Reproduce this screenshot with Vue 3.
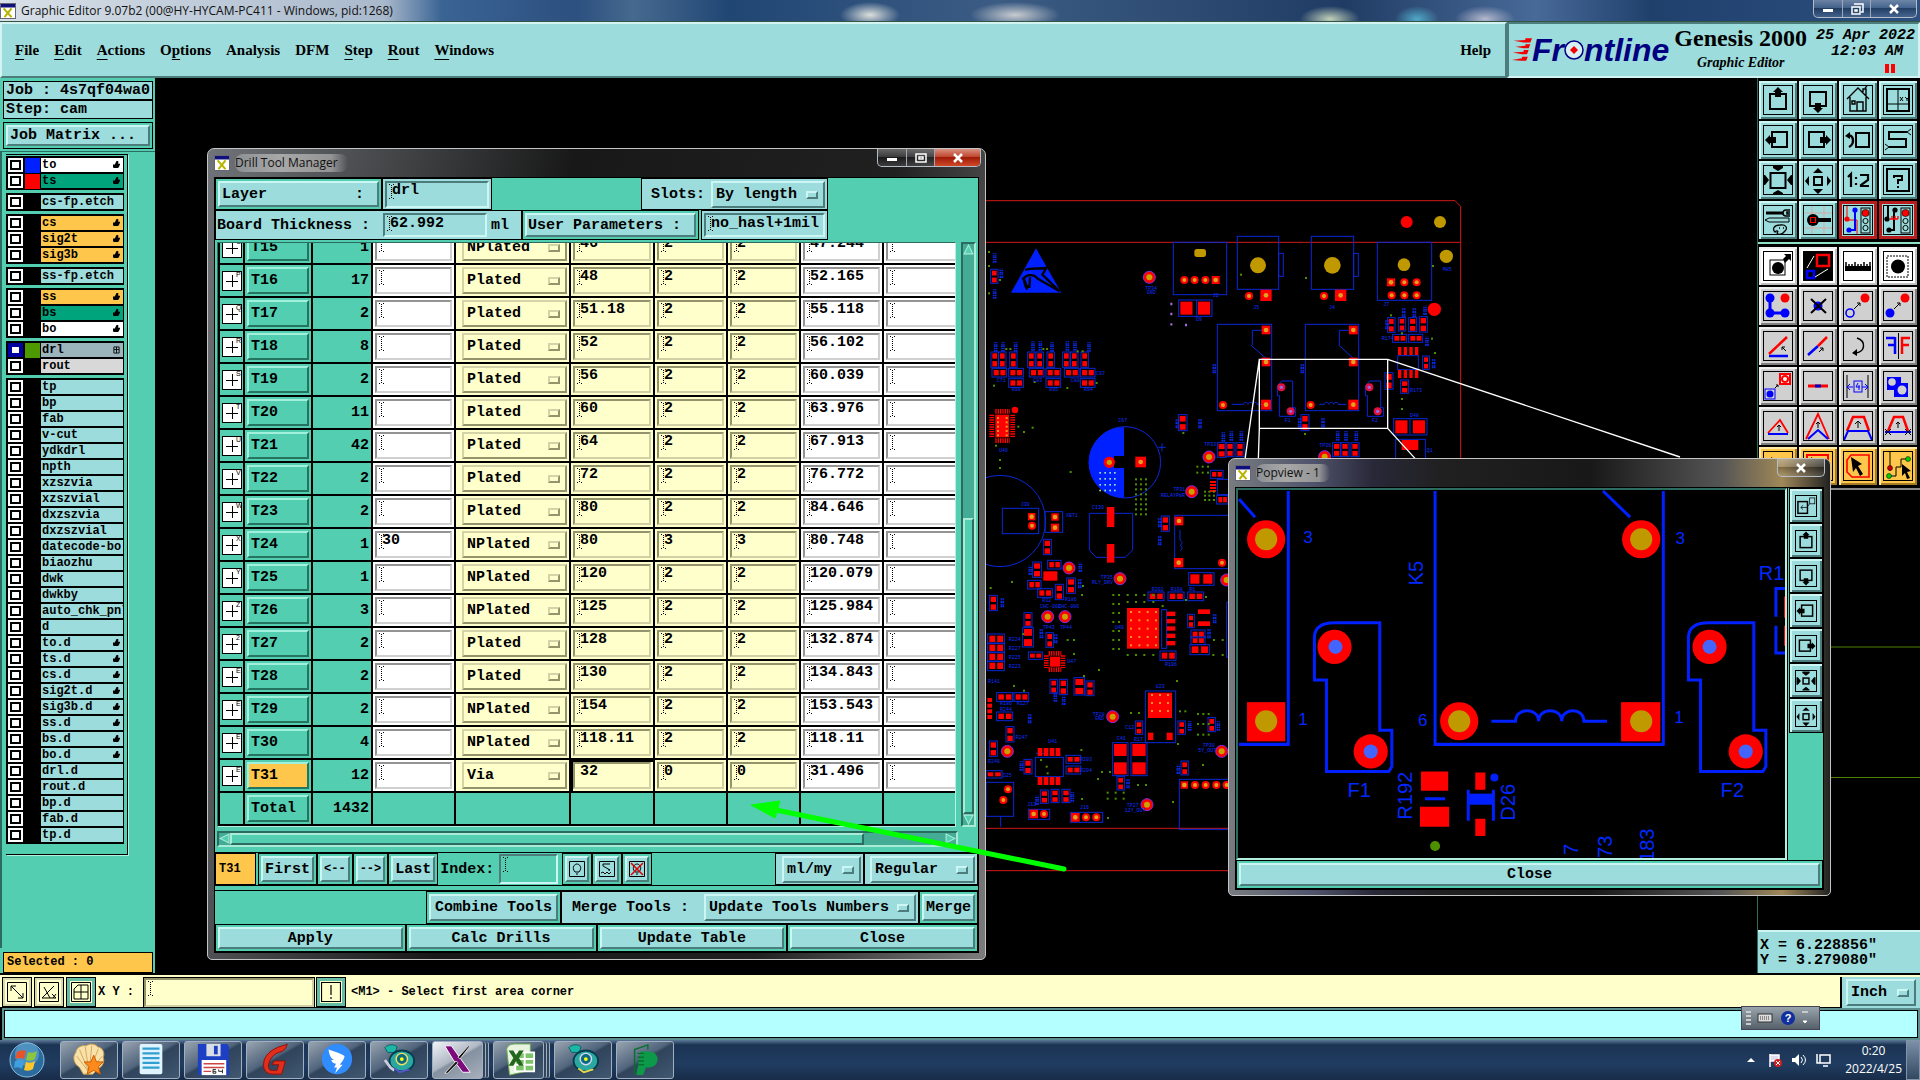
<script setup>
import { ref } from 'vue'

const menus = [
    { name: 'File', at: 0 },
    { name: 'Edit', at: 0 },
    { name: 'Actions', at: 0 },
    { name: 'Options', at: 1 },
    { name: 'Analysis', at: -1 },
    { name: 'DFM', at: -1 },
    { name: 'Step', at: 0 },
    { name: 'Rout', at: 0 },
    { name: 'Windows', at: 0 }
]

const layerGroups = [
    [
        { name: 'to', tone: 'white', color: '#0020ff', hand: true },
        { name: 'ts', tone: 'green', color: '#ff0000', hand: true }
    ],
    [{ name: 'cs-fp.etch' }],
    [
        { name: 'cs', tone: 'orange', hand: true },
        { name: 'sig2t', tone: 'orange', hand: true },
        { name: 'sig3b', tone: 'orange', hand: true }
    ],
    [{ name: 'ss-fp.etch' }],
    [
        { name: 'ss', tone: 'orange', hand: true },
        { name: 'bs', tone: 'green', hand: true },
        { name: 'bo', tone: 'white', hand: true }
    ],
    [
        { name: 'drl', tone: 'steel', color: '#4c9900', grid: true, on: true },
        { name: 'rout', tone: 'grey' }
    ],
    [
        ...['tp', 'bp', 'fab', 'v-cut', 'ydkdrl', 'npth', 'xzszvia', 'xzszvial', 'dxzszvia', 'dxzszvial',
            'datecode-bo', 'biaozhu', 'dwk', 'dwkby', 'auto_chk_pnl', 'd'].map(name => ({ name })),
        ...['to.d', 'ts.d', 'cs.d', 'sig2t.d', 'sig3b.d', 'ss.d', 'bs.d', 'bo.d'].map(name => ({ name, hand: true })),
        ...['drl.d', 'rout.d', 'bp.d', 'fab.d', 'tp.d'].map(name => ({ name }))
    ]
]

const tools = ref([
    ['T15', 1, '', 'NPlated', '46', '2', '2', '47.244', 'O'],
    ['T16', 17, '', 'Plated', '48', '2', '2', '52.165', 'P'],
    ['T17', 2, '', 'Plated', '51.18', '2', '2', '55.118', 'Q'],
    ['T18', 8, '', 'Plated', '52', '2', '2', '56.102', 'R'],
    ['T19', 2, '', 'Plated', '56', '2', '2', '60.039', 'S'],
    ['T20', 11, '', 'Plated', '60', '2', '2', '63.976', 'T'],
    ['T21', 42, '', 'Plated', '64', '2', '2', '67.913', 'U'],
    ['T22', 2, '', 'Plated', '72', '2', '2', '76.772', 'V'],
    ['T23', 2, '', 'Plated', '80', '2', '2', '84.646', 'W'],
    ['T24', 1, '30', 'NPlated', '80', '3', '3', '80.748', 'X'],
    ['T25', 1, '', 'NPlated', '120', '2', '2', '120.079', 'Y'],
    ['T26', 3, '', 'NPlated', '125', '2', '2', '125.984', 'Z'],
    ['T27', 2, '', 'Plated', '128', '2', '2', '132.874', '2'],
    ['T28', 2, '', 'Plated', '130', '2', '2', '134.843', 'E'],
    ['T29', 2, '', 'NPlated', '154', '2', '2', '153.543', 'E'],
    ['T30', 4, '', 'NPlated', '118.11', '2', '2', '118.11', 'E'],
    ['T31', 12, '', 'Via', '32', '0', '0', '31.496', 'E']
].map(([id, count, slot, kind, size, plus, minus, drill, sym]) => ({ id, count, slot, kind, size, plus, minus, drill, sym })))

const selected = ref('T31')
const kinds = ['Plated', 'NPlated', 'Via']

// toolbox icons, drawn on a 30 x 30 grid
const up = '<rect x="7" y="9" width="16" height="15" fill="none" stroke="#000" stroke-width="2"/><path d="M15 2l5 5h-2v5h-6V7h-2z"/>'
const down = '<rect x="7" y="7" width="16" height="14" fill="none" stroke="#000" stroke-width="2"/><path d="M15 28l5-5h-2v-5h-6v5h-2z"/>'
const left = '<rect x="9" y="7" width="15" height="15" fill="none" stroke="#000" stroke-width="2"/><path d="M2 15l5-5v2h6v6H7v2z"/>'
const right = '<rect x="6" y="7" width="15" height="15" fill="none" stroke="#000" stroke-width="2"/><path d="M28 15l-5-5v2h-6v6h6v2z"/>'
const zoomOut = '<rect x="7.5" y="8" width="15" height="15" fill="none" stroke="#000" stroke-width="2"/><path d="M15 6l-5-3V1h10v2zM15 25l-5 3v1h10v-1zM6 15l-4-5H1v10h1zM24 15l4-5h1v10h-1z"/>'
const zoomIn = '<rect x="11" y="12" width="8" height="8" fill="none" stroke="#000" stroke-width="2"/><path d="M15 3l5 5H10zM15 29l5-5H10zM2 16l4-5v10zM28 16l-4-5v10z"/>'
const popZoomOut = '<rect x="11" y="11" width="8" height="8" fill="none" stroke="#000" stroke-width="2"/><path d="M15 8l-5-4V2h10v2zM15 23l-5 4v1h10v-1zM8 15l-4-5H2v10h2zM22 15l4-5h2v10h-2z"/>'
const lights = '<rect x="18" y="3" width="9" height="25" fill="none" stroke="#000"/><circle cx="22.5" cy="8" r="3.6" fill="#f00" stroke="#000" stroke-width=".6"/><circle cx="22.5" cy="16" r="2.6" fill="none" stroke="#000"/><circle cx="22.5" cy="23" r="2.6" fill="none" stroke="#000"/>'
const pointer = 'M8 6l11 7-4 2 5 8-3 2-4-8-3 4z'

const viewTools = [
    { title: 'Pan up', svg: up },
    { title: 'Pan down', svg: down },
    { title: 'Home', svg: '<path d="M4 14L15 3l11 11M7 12v14h16V12M14 26V17h6v9M9 16h3v3H9zM20 7V4h3v7M22 3l2-2" fill="none" stroke="#000" stroke-width="1.4"/>' },
    { title: 'Zoom by XY', svg: '<rect x="4" y="4" width="22" height="22" fill="none" stroke="#000" stroke-width="2"/><path d="M15 4v22M4 19h22M17 12l3 4M20 12l-3 4M22 12l2 2 2-2M24 14v2" fill="none" stroke="#000"/>' },
    { title: 'Pan left', svg: left },
    { title: 'Pan right', svg: right },
    { title: 'Previous view', svg: '<rect x="13" y="8" width="13" height="14" fill="none" stroke="#000" stroke-width="2"/><path d="M4 11c7-3 8 8 2 11" fill="none" stroke="#000" stroke-width="2.4"/><path d="M2 11l5-4v7z"/>' },
    { title: 'Serpentine', svg: '<path d="M24 7H6v7h17v8H6" fill="none" stroke="#000" stroke-width="2"/><path d="M24 7l4-3M24 7l4 3M6 22l-4-3M6 22l-4 3" stroke="#000"/>' },
    { title: 'Zoom out', svg: zoomOut },
    { title: 'Zoom in', svg: zoomIn },
    { title: 'Zoom ratio', svg: '<path d="M5 12l3-3v13M13 12v2M13 18v2M17 10h8v5l-7 5v1h8" fill="none" stroke="#000" stroke-width="2.2"/>' },
    { title: 'Query', svg: '<rect x="4" y="4" width="22" height="22" fill="none" stroke="#000" stroke-width="2"/><path d="M11 13v-2h8v4h-4v4M15 21v2" fill="none" stroke="#000" stroke-width="2"/>' },
    { title: 'Setup', svg: '<path d="M3 8h17" stroke="#000" stroke-width="3"/><path d="M27 5h-4c-4 0-4 6 0 6h4M27 7h-3v2h3" fill="none" stroke="#000" stroke-width="1.6"/><path d="M2 15l4-2h20v4H6z" fill="none" stroke="#000"/><path d="M12 27c-3-3-1-7 5-7 6-1 8 3 5 6-3 4-7 4-8 2 2-2 0-3-2-1zM16 23h1M20 23h1" fill="none" stroke="#000" stroke-width="1.3"/>' },
    { title: 'Snap', svg: '<path d="M2 8h27M2 23h27M9 1v28M21 1v28" stroke="#d9a9a2"/><circle cx="10" cy="15" r="6"/><path d="M14 15h14" stroke="#000" stroke-width="4"/><path d="M7.5 12.5h5v5h-5z" fill="#000" stroke="#f00" stroke-width="1.2"/>' },
    { title: 'Net red', tone: 'red', svg: '<path d="M4 1v14h10v14" fill="none" stroke="#f00"/><path d="M12 6v19H6" fill="none" stroke="#00f" stroke-width="2"/><circle cx="4" cy="14" r="2.6" fill="#f00"/><circle cx="12" cy="5" r="2.6" fill="#00f"/><circle cx="6" cy="25" r="2.6" fill="#00f"/>' + lights },
    { title: 'Net black', tone: 'red', svg: '<path d="M5 14V1M11 6v19H7" fill="none" stroke="#000" stroke-width="2"/><path d="M7 14h8M9 11v3M12 11v3M15 11v3" stroke="#f00" stroke-width="1.3"/><circle cx="4" cy="14" r="2.6"/><circle cx="12" cy="5" r="2.6"/><circle cx="6" cy="25" r="2.6"/>' + lights }
]

const editTools = [
    { title: 'Select one', tone: 'white', svg: '<rect x="7" y="9" width="15" height="15" fill="none" stroke="#000"/><circle cx="15" cy="17" r="6"/><path d="M20 8l3-3-2-2h7v7l-2-2-4 4z"/>' },
    { title: 'Select by frame', tone: 'white', svg: '<rect x="1" y="1" width="28" height="28"/><rect x="14" y="4" width="12" height="11" fill="none" stroke="#f00" stroke-width="2.5"/><rect x="4" y="20" width="7" height="7" fill="none" stroke="#00f" stroke-width="2.5"/><path d="M4 17l7-12M12 26l13-8" stroke="#fff"/>' },
    { title: 'Measure', tone: 'white', svg: '<path d="M3 19v-8M6 19v-6M9 19v-6M12 19v-8M15 19v-6M18 19v-6M21 19v-8M24 19v-6M27 19v-8" stroke="#000" stroke-width="1.5"/><path d="M2 15h26v5H2z"/>' },
    { title: 'Filter', tone: 'white', svg: '<rect x="4" y="5" width="21" height="21" fill="none" stroke="#000" stroke-dasharray="2 1"/><circle cx="15" cy="15.5" r="7"/>' },
    { title: 'Copy', svg: '<path d="M7 7v15h15" fill="none" stroke="#00f" stroke-width="3"/><circle cx="7" cy="7" r="4.5" fill="#00f"/><circle cx="7" cy="22" r="4.5" fill="#00f"/><circle cx="22" cy="22" r="4.5" fill="#00f"/><circle cx="22" cy="7" r="4.5" fill="#f00"/>' },
    { title: 'Delete', svg: '<circle cx="15" cy="15" r="4.5" fill="#00f"/><path d="M8 8l15 14M23 8L8 22" stroke="#000" stroke-width="2"/>' },
    { title: 'Move', svg: '<circle cx="7" cy="22" r="4" fill="none" stroke="#00f" stroke-width="1.6"/><circle cx="22" cy="7" r="4.5" fill="#f00"/><path d="M11 18l6-6M14 12h3v3" stroke="#000" fill="none"/>' },
    { title: 'Duplicate', svg: '<circle cx="7" cy="22" r="4.5" fill="#00f"/><circle cx="22" cy="7" r="4.5" fill="#f00"/><path d="M11 18l6-6M14 12h3v3" stroke="#000" fill="none"/>' },
    { title: 'Rotate', svg: '<path d="M6 25h19" stroke="#00f" stroke-width="2.5"/><path d="M6 23L24 6" stroke="#f00" stroke-width="2.5"/><path d="M23 20l-4-4M19 19v-3h3" stroke="#000" fill="none"/>' },
    { title: 'Stretch', svg: '<path d="M5 24l10-9" stroke="#00f" stroke-width="2.5"/><path d="M15 15l9-9" stroke="#f00" stroke-width="2.5"/><path d="M16 21l4-4M17 17h3v3" stroke="#000" fill="none"/>' },
    { title: 'Turn', svg: '<path d="M14 7c9 3 9 14-2 15" fill="none" stroke="#000" stroke-width="1.5"/><path d="M14 18l-5 4 5 3z"/>' },
    { title: 'Mirror', svg: '<path d="M3 7h9M5 14h7M12 6v17" fill="none" stroke="#00f" stroke-width="2.5"/><path d="M27 7h-8v16M19 14h7" fill="none" stroke="#f00" stroke-width="2.5"/><path d="M15.5 2v26" stroke="#000"/>' },
    { title: 'Scale', svg: '<rect x="2" y="18" width="10" height="10" fill="none" stroke="#00f"/><circle cx="7" cy="23" r="3.5" fill="#00f"/><rect x="17" y="3" width="10" height="10" fill="#fff" stroke="#f00" stroke-width="2"/><circle cx="22" cy="8" r="3" fill="none" stroke="#f00" stroke-width="2"/><path d="M12 17l3-3M13 14h2v2" stroke="#000" fill="none"/>' },
    { title: 'Join', svg: '<path d="M5 15h20" stroke="#f00" stroke-width="3"/><path d="M12 15h6" stroke="#00c" stroke-width="3"/>' },
    { title: 'Step and repeat', svg: '<path d="M4 4v23M25 4v23" stroke="#000"/><path d="M5 16h5M19 16h5M7 13l-3 3 3 3M22 13l3 3-3 3" fill="none" stroke="#00f"/><rect x="11" y="10" width="8" height="11" fill="none" stroke="#00f"/><path d="M15 12l-2 4h4M16 14v5" fill="none" stroke="#00f"/>' },
    { title: 'Merge shapes', svg: '<path d="M4 6h14v6h7v14H11v-7H4z" fill="#00f"/><circle cx="9" cy="11" r="3.8" fill="#d0d0d0"/><circle cx="19" cy="19" r="4.5" fill="#d0d0d0"/>' },
    { title: 'Corner', svg: '<path d="M5 22L17 9l8 13" fill="none" stroke="#f00" stroke-width="1.8"/><path d="M5 23h20" stroke="#00f" stroke-width="2"/><path d="M16 20v-6M14 16l2-2 2 2" stroke="#000" fill="none"/>' },
    { title: 'Chamfer', svg: '<path d="M3 28L15 3l11 25" fill="none" stroke="#f00" stroke-width="1.8"/><path d="M5 28l10-9 10 9" fill="none" stroke="#00f" stroke-width="2"/><path d="M15 17v-6M13 13l2-2 2 2" stroke="#000" fill="none"/>' },
    { title: 'Bridge', svg: '<path d="M4 20L10 6h11l5 14" fill="none" stroke="#f00" stroke-width="2.5"/><path d="M1 29l4-9h20l4 9" fill="none" stroke="#00f" stroke-width="2"/><path d="M15 17v-7M12 13l3-3 3 3" stroke="#000" fill="none"/>' },
    { title: 'Trim', svg: '<path d="M5 20L11 6h9l5 14" fill="none" stroke="#f00" stroke-width="2.5"/><path d="M2 21h26" stroke="#00f" stroke-width="2"/><path d="M2 18l6 6M8 18l-6 6M22 18l6 6M28 18l-6 6" stroke="#000"/><path d="M15 17v-6M13 13l2-2 2 2" stroke="#000" fill="none"/>' },
    { title: 'Pick', tone: 'amber', svg: `<path d="${pointer}"/>` },
    { title: 'Pick frame', tone: 'amber', svg: `<rect x="4" y="4" width="21" height="22" fill="none" stroke="#f00" stroke-width="2"/><path d="${pointer}"/>` },
    { title: 'Pick polygon', tone: 'amber', svg: `<path d="M8 4h18v22H9l-5-5V9z" fill="none" stroke="#f00" stroke-width="1.6"/><path d="${pointer}"/>` },
    { title: 'Pick net', tone: 'amber', svg: '<path d="M7 1v19M7 25h6v-9h5V8h8" fill="none" stroke="#000"/><circle cx="7" cy="17" r="2.5" fill="#c00" stroke="#000" stroke-width=".5"/><circle cx="6" cy="25" r="2.5" fill="#0c0" stroke="#000" stroke-width=".5"/><circle cx="25" cy="8" r="2.5" fill="#0c0" stroke="#000" stroke-width=".5"/><path d="M19 13l9 7-4 1 3 6-3 1-2-6-3 3z"/>' }
]

const popTools = [
    { title: 'Restore', svg: '<rect x="4" y="9" width="13" height="16" fill="none" stroke="#000" stroke-width="2"/><rect x="20" y="4" width="7" height="8" fill="none" stroke="#000"/><path d="M20 12l-4 5H8M11 14l-3 3 3 3" stroke="#000" fill="none"/>' },
    { title: 'Up', svg: up },
    { title: 'Down', svg: down },
    { title: 'Left', svg: left },
    { title: 'Right', svg: right },
    { title: 'Zoom out', svg: popZoomOut },
    { title: 'Zoom in', svg: zoomIn }
]

// board artwork, in thirds of a pixel from the board's corner
const vChips = [
    ...[35, 58, 91, 145, 170, 203, 250, 274, 305].map(x => [x, 488, 18, 42]),
    [597, 676, 22, 44], [714, 760, 22, 40], [740, 760, 20, 38], [770, 760, 20, 38],
    [1060, 760, 20, 38], [1085, 760, 20, 38], [1115, 760, 20, 38],
    [1225, 385, 18, 40], [1257, 385, 18, 36], [1288, 385, 20, 38], [1320, 382, 20, 42],
    [1217, 550, 20, 46], [1264, 572, 20, 36], [1330, 500, 16, 36], [965, 676, 20, 44],
    [546, 980, 20, 42], [34, 240, 18, 38],
    [192, 1050, 20, 42], [160, 1118, 22, 42], [262, 1166, 22, 42], [228, 1185, 20, 42],
    [30, 1218, 20, 42], [134, 1270, 20, 38], [130, 1315, 28, 54], [200, 1330, 18, 40],
    [212, 1470, 18, 38], [240, 1470, 20, 42], [284, 1465, 28, 48], [320, 1475, 20, 40],
    [80, 1612, 20, 42], [30, 1655, 20, 42], [134, 1710, 20, 40], [183, 1802, 20, 36],
    [215, 1800, 20, 36], [248, 1800, 20, 36], [468, 1595, 18, 36], [596, 1595, 18, 36],
    [686, 1585, 18, 38], [605, 1715, 18, 38], [413, 1762, 18, 36],
    [400, 1660, 42, 95], [455, 1660, 44, 95], [625, 1275, 16, 36]
]
const hChips = [
    ...[38, 88, 150, 200, 255, 303].map(x => [x, 537, 40, 22]),
    ...[88, 200, 303].map(x => [x, 568, 40, 22]),
    [598, 332, 96, 45], [1243, 688, 96, 45], [1240, 435, 38, 20], [1288, 435, 38, 20],
    [693, 843, 34, 20], [712, 918, 30, 22], [145, 1173, 36, 22], [205, 1113, 36, 22],
    [175, 1198, 40, 22], [506, 1208, 44, 22], [566, 1208, 44, 22], [625, 1208, 44, 22],
    [25, 1334, 46, 25], [25, 1361, 46, 25], [25, 1388, 46, 25], [25, 1415, 46, 25],
    [542, 1385, 44, 24], [52, 1510, 44, 22], [104, 1510, 40, 22], [52, 1568, 44, 22],
    [147, 1388, 38, 18], [260, 1698, 40, 20], [260, 1730, 40, 20], [635, 1322, 38, 20],
    [635, 1342, 38, 20], [632, 1366, 54, 26], [628, 1150, 72, 34], [20, 1744, 44, 18]
]
const testPoints = [
    [508, 262], [687, 801], [635, 905], [1034, 800], [267, 1134], [420, 1166], [203, 1280],
    [255, 1280], [398, 1580], [82, 1684], [725, 1684], [501, 1844], [740, 1170]
]
const roundPads = [
    [613, 270], [644, 270], [676, 270], [807, 318], [1032, 318], [1273, 277], [1310, 277],
    [1235, 316], [1273, 316], [1310, 316], [729, 645], [992, 645], [156, 1007],
    [726, 1118], [84, 1798], [70, 1830], [192, 1872], [318, 1882], [349, 1882],
    [645, 1785], [677, 1785], [709, 1785], [740, 1785]
]
const squarePads = [
    [707, 270, 24], [858, 316, 34], [1082, 316, 34], [1233, 277, 24], [858, 420, 26], [1120, 420, 26],
    [858, 516, 26], [1120, 516, 26], [858, 644, 30], [1120, 644, 30], [482, 816, 32], [155, 980, 22],
    [225, 981, 22], [225, 1013, 24], [597, 993, 26], [596, 1118, 28], [161, 1872, 26], [286, 1882, 26], [613, 1785, 22]
]
const redBlocks = [
    [381, 951, 22, 60], [381, 1062, 22, 56], [1265, 750, 50, 30], [441, 1254, 96, 122], [504, 1508, 72, 76],
    [504, 1628, 16, 22], [560, 1628, 18, 22], [190, 1144, 42, 28], [654, 1258, 36, 14], [654, 1294, 36, 14],
    ...[0, 1, 2, 3, 4].map(i => [560, 1265 + i * 22, 26, 13]),
    ...[0, 1, 2, 3].map(i => [1254 + i * 17, 471, 10, 24]),
    ...[0, 1, 2, 3].map(i => [1254 + i * 17, 540, 10, 24]),
    ...[0, 1, 2, 3].map(i => [173 + i * 18, 1674, 14, 24]),
    ...[0, 1, 2, 3].map(i => [173 + i * 18, 1761, 14, 24]),
    ...[0, 1, 2, 3].map(i => [690, 873 + i * 9, 18, 6]),
    ...[0, 1, 2, 3].map(i => [22, 1524 + i * 17, 14, 12])
]
const dots = [
    ...[0, 1, 2, 3, 4, 5, 6, 7].flatMap(i => [0, 1, 2].map(j => [468 + j * 15, 868 + i * 15])),
    ...[0, 1, 2, 3, 4, 5, 6].map(i => [400, 1215 + i * 27]),
    ...[0, 1, 2, 3, 4, 5, 6].map(i => [417, 1215 + i * 27]),
    ...[443, 468, 493, 520].flatMap(x => [[x, 1215], [x, 1236], [x, 1395]]),
    ...[652, 668, 684].flatMap(x => [[x, 830], [x, 848]]),
    ...[675, 688, 702].flatMap(x => [[x, 905], [x, 917], [x, 930]]),
    ...[654, 670, 686].flatMap(x => [[x, 1572], [x, 1602], [x, 1634]]),
    ...[383, 407, 431].flatMap(x => [[x, 1808], [x, 1826]]),
    [27, 186], [27, 228], [60, 270], [27, 310], [79, 477], [91, 477], [190, 477], [201, 477], [293, 484], [308, 484],
    [42, 587], [164, 576], [262, 594], [350, 579], [115, 710], [158, 713], [132, 726], [48, 767], [60, 810],
    [60, 834], [272, 846], [783, 254], [978, 264], [1233, 376], [1266, 430], [1359, 228], [1365, 489], [1356, 446],
    [1266, 627], [1266, 657], [610, 729], [975, 732], [96, 1176], [32, 1194], [309, 1188], [306, 1215], [130, 1332],
    [263, 1350], [282, 1350], [282, 1392], [357, 1440], [312, 1458], [102, 1488], [132, 1502], [591, 1473],
    [600, 1564], [616, 1564], [453, 1569], [477, 1569], [304, 1680], [183, 1710], [200, 1730], [203, 1750],
    [669, 1725], [594, 1662], [354, 1767], [366, 1746], [390, 1746], [474, 1785], [498, 1785], [306, 1827],
    [579, 1836], [384, 1884], [702, 1350], [728, 1350], [700, 1395], [728, 1395], [548, 1248], [618, 1230], [678, 1221]
]
const goldDots = [
    ...[0, 1, 2, 3, 4].flatMap(i => [0, 1, 2, 3].map(j => [453 + j * 25, 1266 + i * 25])),
    ...[0, 1, 2].flatMap(i => [516, 540, 564].map(x => [x, 1515 + i * 24])),
    ...[0, 1, 2, 3, 4].flatMap(i => [[54, 684 + i * 13], [80, 684 + i * 13]])
]
const outlines = [
    [580, 157, 160, 157], [772, 139, 124, 159], [896, 190, 14, 69], [994, 139, 127, 159], [1121, 190, 14, 69],
    [1192, 157, 163, 174], [712, 403, 163, 259], [976, 403, 160, 259], [1253, 497, 62, 42], [1247, 748, 89, 62],
    [67, 955, 109, 76], [195, 965, 53, 62], [584, 976, 170, 160], [496, 1503, 91, 155], [166, 1702, 84, 58],
    [18, 1777, 83, 102], [145, 1858, 64, 30], [271, 1867, 97, 30], [598, 1768, 160, 150], [712, 868, 40, 46],
    [740, 1237, 20, 165], [545, 1259, 15, 116]
]
const silk = [
    [495, 300, 'TP34'], [500, 312, 'GND'], [820, 356, 'J5'], [1047, 356, 'J4'], [1388, 244, 'MH5'], [1210, 349, 'J7'],
    [648, 393, 'D9'], [698, 322, 'J2'], [415, 697, 'C67'], [580, 904, 'TP31'], [543, 921, 'RELAYPWR'],
    [122, 947, 'J30'], [258, 980, 'XBT1'], [336, 958, 'C130'], [95, 604, 'R98'], [208, 604, 'R95'], [312, 604, 'R94'],
    [50, 575, 'C71'], [160, 575, 'C83'], [272, 575, 'C80'], [348, 554, 'C97'], [57, 786, 'U46'], [914, 696, 'F1'],
    [1176, 696, 'F2'], [673, 768, 'TP33'], [1018, 771, 'TP36'], [1205, 450, 'R174'], [1290, 605, 'R173'], [1290, 680, 'D48'],
    [1340, 786, 'Q1'], [362, 1168, 'TP35'], [336, 1181, 'RLY_DRV'], [180, 1254, 'CHC-002'], [235, 1254, 'CHC-006'],
    [188, 1316, 'TP43'], [240, 1316, 'TP44'], [86, 1352, 'R224'], [86, 1379, 'R227'], [86, 1406, 'R225'], [86, 1433, 'R223'],
    [405, 1316, 'U49'], [515, 1203, 'R202'], [572, 1203, 'R198'], [628, 1203, 'R1'], [555, 1427, 'R196'], [527, 1495, 'U23'],
    [338, 1577, 'TP28'], [345, 1590, 'GND'], [60, 1545, 'R186'], [110, 1545, 'R127'], [60, 1562, 'R244'], [107, 1648, 'R247'],
    [205, 1660, 'U41'], [300, 1713, 'R203'], [300, 1745, 'R204'], [410, 1650, 'C46'], [462, 1653, 'R17'], [668, 1672, 'TP30'],
    [655, 1687, '5Y_OUT'], [142, 1847, 'J13'], [300, 1856, 'J16'], [440, 1852, 'TP27'], [434, 1867, '12Y_OUT'], [68, 1760, 'D25'],
    [254, 1234, 'R186'], [187, 1237, 'R32'], [262, 1420, 'U47'], [436, 1617, 'C12'], [24, 1480, 'R141'], [24, 1719, 'R246']
]
const silkUp = [
    [48, 485], [70, 485], [108, 485], [160, 482], [182, 482], [217, 485], [263, 482], [286, 482], [328, 485],
    [704, 550], [968, 550], [1222, 418], [1272, 382], [1304, 382], [1336, 375], [1342, 468], [1362, 535],
    [593, 715], [661, 715], [960, 712], [1030, 712], [731, 755], [755, 752], [785, 752], [1074, 752], [1099, 752],
    [1130, 752], [65, 264], [45, 218], [45, 326], [68, 1252], [152, 1155], [300, 1195], [302, 1146], [185, 1345],
    [228, 1360], [227, 1535], [252, 1545], [150, 1600], [172, 1845], [278, 1835], [445, 1795], [596, 1752],
    [716, 1622], [630, 1622], [705, 1300], [688, 1345], [540, 1012], [540, 1066], [125, 1742]
]

const tasks = [
    { title: 'Shell', svg: '<path d="M8 26C2 22 0 15 4 10 5 4 11 2 15 3c4-3 10-2 12 1 6 1 8 7 6 11 2 5-1 10-5 12l-6 6H12z" fill="#f8e2ac" stroke="#c49a4a"/><path d="M18 31L5 14M18 31L8 7M18 31L14 4M18 31L21 3M18 31L28 6M18 31l14-17" stroke="#d8a550" fill="none"/><path d="M23 13l3 7 7 0-5 5 2 8-7-4-7 4 2-8-5-5 7 0z" fill="#ff8a1c" stroke="#c45a00"/>' },
    { title: 'Notes', svg: '<rect x="6" y="1" width="24" height="32" rx="2" fill="#dff4ff"/><path d="M9 6h18M9 11h18M9 16h18M9 21h18M9 26h18" stroke="#329fd0" stroke-width="2.5"/>' },
    { title: 'Save', svg: '<path d="M2 1h31l2 3v30H2z" fill="#1c3fc4"/><rect x="11" y="1" width="15" height="13" fill="#d9dde4"/><rect x="19" y="3" width="4" height="9" fill="#1c3fc4"/><rect x="6" y="18" width="26" height="16" fill="#fff"/><path d="M8 22h22M8 26h22M8 30h8" stroke="#c44" stroke-width="1.5"/><path d="M21 28h-3v4h3v-2h-3M24 28v2h4M28 28v4" stroke="#222" fill="none"/>' },
    { title: 'G', svg: '<path d="M31 1c-3 2-8 2-13 5C10 10 5 17 6 25c1 6 5 8 10 8h9l4-14H17l-2 4h7l-2 6h-5c-3 0-4-2-4-5 1-7 5-12 11-14 5-1 8-4 9-9z" fill="#e22c1c" stroke="#8d1208"/>' },
    { title: 'Chat', svg: '<circle cx="18" cy="17" r="16" fill="#2f8dff"/><path d="M9 7c6 2 13 4 17 7-1 5-4 7-5 9h3l-8 9 2-6h-3l2-4c-4-1-5-3-5-4h3c-4-2-5-5-6-11z" fill="#fff"/>' },
    { title: 'Capture', svg: '<path d="M3 5c3-4 10-4 13-1l-2 6H6z" fill="#1db7a6" stroke="#0b5e66"/><ellipse cx="21" cy="19" rx="13" ry="11" fill="#2aa8a0" stroke="#063c50" stroke-width="2"/><circle cx="21" cy="17" r="6" fill="#0d6a86" stroke="#f0e060" stroke-width="1.5"/><circle cx="21" cy="17" r="2" fill="#ff0"/><path d="M3 18l6 8 4 3" stroke="#ccd" stroke-width="3" fill="none"/><path d="M13 27l6 4 10-3" stroke="#55c" stroke-width="2" fill="none"/>' },
    { title: 'X server', active: true, stack: true, svg: '<path d="M4 3h7l10 14 10 14h-8L13 18z" fill="#7d0a7d" stroke="#fff"/><path d="M31 3h-2L18 15l2 2zM16 19L4 32h3l11-11z" fill="#111" stroke="#ddd"/>' },
    { title: 'Sheet', stack: true, svg: '<path d="M5 7c0-4 4-6 9-6h16v28L8 34z" fill="#e9f4e0" stroke="#6aa84f"/><rect x="14" y="10" width="20" height="20" fill="#7cc36a" stroke="#fff" stroke-width="2"/><path d="M14 17h20M14 23h20M24 10v20" stroke="#fff" stroke-width="2"/><path d="M7 8h5l3 5 3-5h5l-5 8 5 8h-5l-3-5-3 5H7l5-8z" fill="#23671c"/>' },
    { title: 'Capture two', svg: '<path d="M3 5c3-4 10-4 13-1l-2 6H6z" fill="#1db7a6" stroke="#0b5e66"/><ellipse cx="21" cy="19" rx="13" ry="11" fill="#2aa8a0" stroke="#063c50" stroke-width="2"/><circle cx="21" cy="17" r="6" fill="#0d6a86" stroke="#d8d8f0" stroke-width="1.5"/><circle cx="21" cy="17" r="2" fill="#ff0"/><path d="M13 27l6 4 10-3" stroke="#e8d850" stroke-width="2" fill="none"/>' },
    { title: 'P', svg: '<path d="M13 9h9c13 0 12 17 0 17h-3l-3 8H9z" fill="#0c9a48"/><path d="M7 33V7L21 2v5M10 11h7M10 15h7M10 19h7M10 23h7" stroke="#08702f" fill="none" stroke-width="1.5"/>' }
]
</script>

<template>
    <div class="editor">
        <header class="titlebar">
            <svg class="app-icon" viewBox="0 0 16 16"><rect width="16" height="16" fill="#fff" /><rect width="16" height="4" fill="#10107c" /><path d="M3 5l9 10M12 5L4 15" stroke="#b8b400" stroke-width="2.4" /></svg>
            <span class="titlebar__text">Graphic Editor 9.07b2 (00@HY-HYCAM-PC411 - Windows, pid:1268)</span>
            <div class="controls">
                <button aria-label="Minimize"><svg viewBox="0 0 14 12"><rect x="2" y="6" width="10" height="3" fill="#fff" /></svg></button>
                <button aria-label="Restore"><svg viewBox="0 0 14 12"><path d="M4 1h9v8h-2M2 4h8v7H2zM5 7h2v1H5z" fill="none" stroke="#fff" stroke-width="1.5" /></svg></button>
                <button class="controls__close" aria-label="Close editor"><svg viewBox="0 0 14 12"><path d="M3 2l8 8M11 2l-8 8" stroke="#fff" stroke-width="2.5" /></svg></button>
            </div>
        </header>

        <div class="top">
            <nav class="menubar">
                <button v-for="m in menus" :key="m.name" class="menubar__item">
                    <template v-for="(c, i) in m.name" :key="i"><u v-if="i === m.at">{{ c }}</u><template v-else>{{ c }}</template></template>
                </button>
                <button class="menubar__item menubar__help">Help</button>
            </nav>
            <div class="brand">
                <div class="brand__logo">
                    <svg class="brand__speed" viewBox="0 0 24 28"><path d="M2 3l14-1V0h8l-2 5h-8zM4 10l12-1V7h6l-2 5h-6zM1 17l13-1v-2h6l-2 5h-6zM0 26l12-2v-2h7l-2 5h-6z" fill="#f00000" /></svg>
                    <span>Fr</span>
                    <svg class="brand__o" viewBox="0 0 20 22"><ellipse cx="10" cy="11" rx="9" ry="9" fill="#d8f0f4" stroke="#000080" stroke-width="1.5" /><path d="M10 7l4 4-4 4-4-4z" fill="#f00000" /></svg>
                    <span>ntline</span>
                </div>
                <div class="brand__name">
                    <strong>Genesis 2000</strong>
                    <em>Graphic Editor</em>
                </div>
                <div class="brand__date">
                    <span>25 Apr 2022</span>
                    <span class="brand__time">12:03 AM</span>
                    <i class="brand__pause"></i>
                </div>
            </div>
        </div>

        <div class="workspace">
            <aside class="sidebar">
                <div class="job">
                    <div class="job__line">Job : 4s7qf04wa0</div>
                    <div class="job__line">Step: cam</div>
                </div>
                <div class="frame job__matrix"><button class="motif">Job Matrix ...</button></div>
                <div class="layers">
                    <div class="layers__inner">
                        <div v-for="(group, g) in layerGroups" :key="g" class="layers__group">
                            <div v-for="l in group" :key="l.name" class="layer" :class="l.tone">
                                <input type="checkbox" class="layer__check" :class="{ on: l.on }" :aria-label="l.name">
                                <span class="layer__swatch" :style="{ background: l.color || '#000' }"></span>
                                <span class="layer__name">{{ l.name }}</span>
                                <svg v-if="l.hand" class="layer__hand" viewBox="0 0 8 9"><path d="M4 0h2v3h2v2H7v2H6v1H1L0 7V4h2z" /></svg>
                                <svg v-if="l.grid" class="layer__hand" viewBox="0 0 8 9"><path d="M1 1h6v7H1zM1 4h6M4 1v7" fill="none" stroke="#000" /></svg>
                            </div>
                        </div>
                    </div>
                </div>
                <div class="picked">Selected : 0</div>
            </aside>

            <main class="stage">
                <svg class="stage__board" viewBox="155 78 1602 895" preserveAspectRatio="xMinYMin meet">
                    <g transform="translate(980 190) scale(0.33333)" fill="none" stroke-width="3">
                        <path d="M-100 32H1425l17 17V2042H-100M-100 157H1442M-100 1915H1442" stroke="#d01818" />
                        <g stroke="#0a28d8">
                            <rect v-for="(o, i) in outlines" :key="i" :x="o[0]" :y="o[1]" :width="o[2]" :height="o[3]" />
                            <circle cx="435" cy="817" r="107" />
                            <circle cx="60" cy="993" r="137" />
                            <path d="M328 970h130v110l-22 22h-88l-20-22zM817 465v-44h30M812 465l46 40M1078 465v-44h30M1076 465l44 40M755 643h35c0-8 14-8 14 0 0-8 14-8 14 0 0-8 14-8 14 0h14M1018 643h15c0-8 14-8 14 0 0-8 14-8 14 0 0-8 14-8 14 0h24M535 772h22M546 760v24" />
                            <path v-for="x in [0, 264]" :key="x" :transform="`translate(${x} 0)`" d="M905 573h33v80h8v26h-48v-62h-6v-30z" />
                            <path d="M600 1020v30c8 4 8 12 0 16 8 4 8 12 0 16M650 330v46M1290 688v44M690 1150v34M195 1690h-28M62 1880v30" />
                            <rect v-for="(c, i) in vChips" :key="'v' + i" :x="c[0] - 2" :y="c[1] - 2" :width="c[2] + 4" :height="c[3] + 4" />
                            <rect v-for="(c, i) in hChips" :key="'h' + i" :x="c[0] - 2" :y="c[1] - 2" :width="c[2] + 4" :height="c[3] + 4" />
                        </g>
                        <path d="M432 711A106 106 0 0 0 432 924V834H402V798h30z" fill="#0020ff" />
                        <path d="M168 175L244 308H93z" fill="#0020ff" />
                        <path d="M135 240c20-8 40-2 64-6l-12 20 52 50-66-38c-12-16-34-12-42 0l12 28M128 262c8 12 4 26 14 36M150 262l-2 32" stroke="#000" stroke-width="7" />
                        <g fill="#ff0000">
                            <template v-for="(c, i) in vChips" :key="i">
                                <rect :x="c[0] + 2" :y="c[1] + 2" :width="c[2] - 4" :height="c[3] * 0.38" />
                                <rect :x="c[0] + 2" :y="c[1] + c[3] * 0.6" :width="c[2] - 4" :height="c[3] * 0.38" />
                            </template>
                            <template v-for="(c, i) in hChips" :key="i">
                                <rect :x="c[0] + 3" :y="c[1] + 3" :width="c[2] * 0.38" :height="c[3] - 6" />
                                <rect :x="c[0] + c[2] * 0.58" :y="c[1] + 3" :width="c[2] * 0.38" :height="c[3] - 6" />
                            </template>
                            <rect v-for="(r, i) in redBlocks" :key="'r' + i" :x="r[0]" :y="r[1]" :width="r[2]" :height="r[3]" />
                            <circle cx="1280" cy="96" r="18" /><circle cx="1363" cy="358" r="20" /><circle cx="105" cy="660" r="10" />
                            <rect x="46" y="674" width="41" height="68" />
                            <rect x="210" y="1400" width="30" height="30" />
                        </g>
                        <path d="M46 664h44M46 752h44M206 1390h38M206 1439h38" stroke="#ff0000" stroke-width="14" stroke-dasharray="4 3" />
                        <path d="M35 674v68M98 674v68M199 1396v38M249 1396v38" stroke="#ff0000" stroke-width="14" stroke-dasharray="4 3" />
                        <g v-for="(t, i) in testPoints" :key="'t' + i">
                            <circle :cx="t[0]" :cy="t[1]" r="18" fill="#ff0000" stroke="#7a30e0" />
                            <circle :cx="t[0]" :cy="t[1]" r="9" fill="#c8a000" />
                        </g>
                        <g v-for="(t, i) in roundPads" :key="'p' + i">
                            <circle :cx="t[0]" :cy="t[1]" r="12" fill="#ff0000" />
                            <circle :cx="t[0]" :cy="t[1]" r="6" fill="#e0a020" />
                        </g>
                        <g v-for="(t, i) in squarePads" :key="'s' + i">
                            <rect :x="t[0] - t[2] / 2" :y="t[1] - t[2] / 2" :width="t[2]" :height="t[2]" fill="#ff0000" />
                            <circle :cx="t[0]" :cy="t[1]" r="7" fill="#e0a020" />
                        </g>
                        <circle cx="388" cy="817" r="17" fill="#ff0000" /><circle cx="388" cy="817" r="8" fill="#c8a000" />
                        <g v-for="(t, i) in [[904, 592], [932, 664], [1168, 592], [1193, 664]]" :key="'f' + i">
                            <circle :cx="t[0]" :cy="t[1]" r="12" fill="#e01040" /><circle :cx="t[0]" :cy="t[1]" r="5" fill="#9070e0" />
                        </g>
                        <g fill="#c09800">
                            <circle cx="1380" cy="96" r="18" /><circle cx="1399" cy="199" r="20" />
                            <circle cx="834" cy="226" r="24" /><circle cx="1057" cy="226" r="25" /><circle cx="1272" cy="224" r="19" />
                            <rect x="643" y="177" width="35" height="24" rx="8" />
                        </g>
                        <rect v-for="(d, i) in dots" :key="'d' + i" :x="d[0] - 3" :y="d[1] - 3" width="6" height="6" fill="#4c9000" />
                        <rect v-for="(d, i) in goldDots" :key="'g' + i" :x="d[0] - 3" :y="d[1] - 3" width="6" height="6" fill="#ff9020" />
                        <g fill="#a0e0c0">
                            <template v-for="y in [849, 867, 885, 902]" :key="y">
                                <rect v-for="x in [358, 373, 388, 402]" :key="x" :x="x" :y="y - 3" width="5" height="5" />
                            </template>
                        </g>
                        <path d="M571 342h6M571 372h6M571 403h6M615 405h6" stroke="#a070e0" stroke-width="7" />
                        <g class="silk">
                            <text v-for="(s, i) in silk" :key="i" :x="s[0]" :y="s[1]">{{ s[2] }}</text>
                            <path v-for="(s, i) in silkUp" :key="'u' + i" :d="`M${s[0] - 4} ${s[1]}v-28M${s[0] + 2} ${s[1]}v-28`" stroke="#0a28e8" stroke-width="5" stroke-dasharray="6 2 3 2" />
                        </g>
                        <g stroke="#fff" stroke-width="4">
                            <path d="M838 508h385v207H838zM838 508l-43 300M838 715l-3 93M1223 508l877 293M1223 715l82 90" />
                        </g>
                    </g>
                </svg>

                <section class="window drill">
                    <header class="window__title">
                        <svg class="app-icon" viewBox="0 0 16 16"><rect width="16" height="16" fill="#fff" /><rect width="16" height="4" fill="#10107c" /><path d="M3 5l9 10M12 5L4 15" stroke="#b8b400" stroke-width="2.4" /></svg>
                        <span class="window__name">Drill Tool Manager</span>
                        <div class="controls">
                            <button aria-label="Minimize drill manager"><svg viewBox="0 0 14 12"><rect x="2" y="6" width="10" height="3" fill="#fff" /></svg></button>
                            <button aria-label="Maximize drill manager"><svg viewBox="0 0 14 12"><path d="M2 2h10v8H2zM5 5h4v2H5z" fill="none" stroke="#fff" stroke-width="1.5" /></svg></button>
                            <button class="controls__close red" aria-label="Close drill manager"><svg viewBox="0 0 14 12"><path d="M3 2l8 8M11 2l-8 8" stroke="#fff" stroke-width="2.5" /></svg></button>
                        </div>
                    </header>
                    <div class="window__body">
                        <div class="bar bar--layer">
                            <div class="frame w-layer"><button class="motif spread"><span>Layer</span><span>:</span></button></div>
                            <div class="frame cyan w-drl"><input class="field" value="drl" aria-label="Layer"></div>
                            <div class="frame cyan slots">
                                <label for="slots">Slots:</label>
                                <span class="pick"><select id="slots"><option>By length</option></select></span>
                            </div>
                        </div>
                        <div class="bar bar--board">
                            <div class="frame cyan board">
                                <label for="thick">Board Thickness :</label>
                                <input id="thick" class="field" value="62.992">
                                <span>ml</span>
                            </div>
                            <div class="frame w-user"><button class="motif">User Parameters :</button></div>
                            <div class="frame cyan w-hasl"><input class="field" value="no_hasl+1mil" aria-label="User Parameters"></div>
                        </div>

                        <div class="grid">
                            <div class="grid__clip">
                                <table>
                                    <colgroup>
                                        <col class="c-icon"><col class="c-id"><col class="c-count"><col class="c-slot"><col class="c-kind">
                                        <col class="c-size"><col class="c-tol"><col class="c-tol"><col class="c-slot"><col class="c-slot">
                                    </colgroup>
                                    <tbody>
                                        <tr v-for="t in tools" :key="t.id">
                                            <td><svg class="sym" viewBox="0 0 20 20"><rect x="0.5" y="0.5" width="19" height="19" fill="#fff" stroke="#000" /><path d="M4 10.5h12M10.5 4v12" stroke="#000" /><text x="14" y="6">{{ t.sym }}</text></svg></td>
                                            <td><button class="motif tool" :class="{ hot: t.id === selected }" @click="selected = t.id">{{ t.id }}</button></td>
                                            <td class="num">{{ t.count }}</td>
                                            <td class="white"><input v-model="t.slot" class="field" :aria-label="t.id + ' slot'"></td>
                                            <td class="cream"><span class="pick"><select v-model="t.kind" :aria-label="t.id + ' type'"><option v-for="k in kinds" :key="k">{{ k }}</option></select></span></td>
                                            <td class="cream" :class="{ focus: t.id === selected }"><input v-model="t.size" class="field" :aria-label="t.id + ' size'"></td>
                                            <td class="cream"><input v-model="t.plus" class="field" :aria-label="t.id + ' plus'"></td>
                                            <td class="cream"><input v-model="t.minus" class="field" :aria-label="t.id + ' minus'"></td>
                                            <td class="white"><input v-model="t.drill" class="field" :aria-label="t.id + ' drill'"></td>
                                            <td class="white"><input class="field" :aria-label="t.id + ' note'"></td>
                                        </tr>
                                        <tr>
                                            <td></td>
                                            <td><button class="motif tool">Total</button></td>
                                            <td class="num">1432</td>
                                            <td v-for="n in 7" :key="n"></td>
                                        </tr>
                                    </tbody>
                                </table>
                            </div>
                            <div class="vscroll">
                                <svg viewBox="0 0 10 10"><path d="M5 1l4 8H1z" /></svg>
                                <i class="vscroll__thumb"></i>
                                <svg viewBox="0 0 10 10"><path d="M5 9l4-8H1z" /></svg>
                            </div>
                        </div>
                        <div class="hscroll">
                            <svg viewBox="0 0 10 10"><path d="M1 5l8-4v8z" /></svg>
                            <i class="hscroll__thumb"></i>
                            <svg viewBox="0 0 10 10"><path d="M9 5L1 1v8z" /></svg>
                        </div>

                        <div class="bar bar--nav">
                            <span class="nav-tool">T31</span>
                            <div class="frame"><button class="motif">First</button></div>
                            <div class="frame"><button class="motif arrow">&lt;--</button></div>
                            <div class="frame"><button class="motif arrow">--&gt;</button></div>
                            <div class="frame"><button class="motif">Last</button></div>
                            <label for="index">Index:</label>
                            <input id="index" class="field index">
                            <div class="frame"><button class="motif icon" aria-label="Highlight"><svg viewBox="0 0 16 16"><path d="M.5.5h15v15H.5zM6 11C2 6 6 3 8 3s6 3 2 8zM7 13h2" fill="none" stroke="#000" /></svg></button></div>
                            <div class="frame"><button class="motif icon" aria-label="Path"><svg viewBox="0 0 16 16"><path d="M.5.5h15v15H.5zM11 3H4v2l7 4H9M2 12l2-1 2 2 2-2 2 2 2-2" fill="none" stroke="#000" /></svg></button></div>
                            <div class="frame"><button class="motif icon" aria-label="Clear highlight"><svg viewBox="0 0 16 16"><path d="M.5.5h15v15H.5zM6 11C2 6 6 3 8 3s6 3 2 8zM7 13h2" fill="none" stroke="#000" /><path d="M2 2l12 12M14 2L2 14" stroke="#e00000" stroke-width="1.5" /></svg></button></div>
                            <div class="frame cyan units"><span class="pick"><select aria-label="Units"><option>ml/my</option></select></span></div>
                            <div class="frame cyan mode"><span class="pick"><select aria-label="Mode"><option>Regular</option></select></span></div>
                        </div>
                        <div class="bar bar--merge">
                            <div class="frame"><button class="motif">Combine Tools</button></div>
                            <div class="frame cyan merge">
                                <label for="merge">Merge Tools :</label>
                                <span class="pick"><select id="merge"><option>Update Tools Numbers</option></select></span>
                            </div>
                            <div class="frame w-merge"><button class="motif">Merge</button></div>
                        </div>
                        <div class="bar bar--end">
                            <div v-for="b in ['Apply', 'Calc Drills', 'Update Table', 'Close']" :key="b" class="frame"><button class="motif">{{ b }}</button></div>
                        </div>
                    </div>
                </section>

                <section class="window pop">
                    <header class="window__title">
                        <svg class="app-icon" viewBox="0 0 16 16"><rect width="16" height="16" fill="#fff" /><rect width="16" height="4" fill="#10107c" /><path d="M3 5l9 10M12 5L4 15" stroke="#b8b400" stroke-width="2.4" /></svg>
                        <span class="window__name">Popview - 1</span>
                        <div class="controls">
                            <button class="controls__close" aria-label="Close popview"><svg viewBox="0 0 14 12"><path d="M3 2l8 8M11 2l-8 8" stroke="#fff" stroke-width="2.5" /></svg></button>
                        </div>
                    </header>
                    <div class="window__body pop__body">
                        <div class="pop__row">
                            <svg class="pop__view" viewBox="1238 490 546 366" preserveAspectRatio="xMinYMin slice">
                                <g fill="none" stroke="#0020ff" stroke-width="3">
                                    <path d="M1239 499l16 18M1288 491v252h-49M1601 491l27 26M1434 491v252h227V491" />
                                    <path d="M1490 720h24c0-14 23-14 23 0 0-14 23-14 23 0 0-14 22-14 22 0h23" />
                                    <path v-for="x in [0, 372]" :key="x" :transform="`translate(${x} 0)`" d="M1334 622h45v107h12v36l-3 5h-62v-91h-12v-42q0-15 20-15" />
                                    <path d="M1424 797h20M1467 788v31M1492 788v31M1785 588h-12v28M1773 625v27h12" />
                                </g>
                                <rect x="1468" y="792" width="23" height="11" fill="#0020ff" /><circle cx="1493" cy="776" r="4" fill="#0020ff" />
                                <g fill="#ff0000">
                                    <circle cx="1266" cy="539" r="19" /><circle cx="1639" cy="539" r="19" /><circle cx="1458" cy="720" r="19" />
                                    <rect x="1247" y="701" width="38" height="39" /><rect x="1619" y="701" width="39" height="39" />
                                    <circle cx="1334" cy="646" r="17" /><circle cx="1370" cy="750" r="17" /><circle cx="1707" cy="646" r="17" /><circle cx="1743" cy="750" r="17" />
                                    <path d="M1420 770h27v19h-27zM1419 805h29v20h-29zM1474 771h10v17h-10zM1474 817h10v17h-10zM1781 596h2v21h-2zM1781 625h2v20h-2z" />
                                </g>
                                <g fill="#c09800">
                                    <circle cx="1266" cy="539" r="11" /><circle cx="1639" cy="539" r="11" /><circle cx="1458" cy="720" r="11" />
                                    <circle cx="1266" cy="720" r="11" /><circle cx="1639" cy="720" r="11" />
                                </g>
                                <g fill="#4464ff">
                                    <circle cx="1335" cy="646" r="7" /><circle cx="1370" cy="750" r="7" /><circle cx="1707" cy="646" r="7" /><circle cx="1743" cy="750" r="7" />
                                </g>
                                <circle cx="1434" cy="844" r="5" fill="#4c9000" />
                                <g class="pop__silk">
                                    <text x="1303" y="543">3</text><text x="1298" y="724">1</text><text x="1417" y="725">6</text>
                                    <text x="1673" y="544">3</text><text x="1672" y="722">1</text>
                                    <g class="pop__big">
                                        <text x="1347" y="795">F1</text><text x="1718" y="795">F2</text><text x="1756" y="580">R193</text>
                                        <text transform="translate(1422 585) rotate(-90)">K5</text>
                                        <text transform="translate(1411 818) rotate(-90)">R192</text>
                                        <text transform="translate(1513 819) rotate(-90)">D26</text>
                                        <text transform="translate(1576 853) rotate(-90)">7</text>
                                        <text transform="translate(1610 856) rotate(-90)">73</text>
                                        <text transform="translate(1652 860) rotate(-90)">183</text>
                                    </g>
                                </g>
                            </svg>
                            <div class="pop__tools">
                                <button v-for="t in popTools" :key="t.title" class="cell" :aria-label="'Popview ' + t.title"><svg viewBox="0 0 30 30" v-html="t.svg"></svg></button>
                            </div>
                        </div>
                        <div class="frame pop__close"><button class="motif">Close</button></div>
                    </div>
                </section>

                <svg class="stage__arrow" viewBox="155 78 1602 895" preserveAspectRatio="xMinYMin meet">
                    <path d="M776 810L1064 869" stroke="#00ff00" stroke-width="5" stroke-linecap="round" />
                    <path d="M751 805l29-4-5 17z" fill="#00ff00" stroke="#00ff00" />
                </svg>
            </main>

            <aside class="toolbox">
                <div class="toolbox__grid">
                    <button v-for="t in viewTools" :key="t.title" class="cell" :class="t.tone" :aria-label="t.title"><svg viewBox="0 0 30 30" v-html="t.svg"></svg></button>
                </div>
                <div class="toolbox__grid toolbox__edit">
                    <button v-for="t in editTools" :key="t.title" class="cell grey" :class="t.tone" :aria-label="t.title"><svg viewBox="0 0 30 30" v-html="t.svg"></svg></button>
                </div>
                <div class="overview">
                    <svg viewBox="0 0 160 440" preserveAspectRatio="xMinYMin slice"><path d="M0 155h160M0 284h160" stroke="#4c8000" /></svg>
                </div>
                <div class="coords">
                    <span>X = 6.228856"</span>
                    <span>Y = 3.279080"</span>
                </div>
            </aside>
        </div>

        <div class="status">
            <button class="status__btn" aria-label="Free angle"><svg viewBox="0 0 20 20"><path d="M.5.5h19v19H.5zM4 4l12 12M4 9V4h5M16 11v5h-5" fill="none" stroke="#000" /></svg></button>
            <button class="status__btn" aria-label="Fixed angle"><svg viewBox="0 0 20 20"><path d="M.5.5h19v19H.5zM3 16L15 4M3 16h14M5 5l6 11M13 12l4 4M17 12l-3 4" fill="none" stroke="#000" /></svg></button>
            <button class="status__btn teal" aria-label="Snap grid"><svg viewBox="0 0 20 20"><path d="M.5.5h19v19H.5zM3 7l4-4h10v14H3zM10 3v14M3 10h14" fill="none" stroke="#000" /></svg></button>
            <label for="xy" class="status__xy">X Y :</label>
            <input id="xy" class="field status__input">
            <button class="status__btn teal" aria-label="Accept"><svg viewBox="0 0 20 20"><path d="M.5.5h19v19H.5zM10 3v10M10 15v2" fill="none" stroke="#000" stroke-width="1.2" /></svg></button>
            <span class="status__msg">&lt;M1&gt; - Select first area corner</span>
            <div class="status__unit"><span class="pick"><select aria-label="Coordinate unit"><option>Inch</option></select></span></div>
        </div>
        <div class="output"></div>

        <div class="langbar">
            <i class="langbar__grip"></i>
            <svg viewBox="0 0 18 12"><rect x="1" y="2" width="14" height="8" fill="#ddd" stroke="#333" /><path d="M3 5h10M3 7h10" stroke="#333" stroke-dasharray="1 1" /></svg>
            <b>?</b>
            <svg class="langbar__more" viewBox="0 0 8 16"><path d="M1 2h6M2 11h4l-2 2z" stroke="#fff" fill="#fff" /></svg>
        </div>

        <footer class="taskbar">
            <button class="start" aria-label="Start">
                <svg viewBox="0 0 38 38">
                    <circle cx="19" cy="19" r="17" fill="#2c6b9e" stroke="#8cc0dc" /><circle cx="19" cy="13" r="12" fill="#6fb6de" opacity="0.5" />
                    <path d="M9 11q5-3 9-1l-2 8q-4-2-9 0z" fill="#e8542a" /><path d="M20 11q5 2 9-1l-2 8q-4 3-9 1z" fill="#8cc63e" />
                    <path d="M7 20q5-2 9 0l-2 8q-4-3-8-1z" fill="#3fa0e0" /><path d="M18 21q5 2 9-1l-2 8q-4 3-9 1z" fill="#fcc62c" />
                </svg>
            </button>
            <button v-for="t in tasks" :key="t.title" class="task" :class="{ active: t.active, stack: t.stack }" :aria-label="t.title"><svg viewBox="0 0 36 36" v-html="t.svg"></svg></button>
            <div class="tray">
                <svg viewBox="0 0 16 16"><path d="M8 6l4 4H4z" fill="#fff" /></svg>
                <svg viewBox="0 0 16 16"><path d="M3 2v13M3 3h9v6H3" stroke="#fff" fill="#dde" stroke-width="1.5" /><circle cx="11" cy="11" r="4" fill="#d02020" /><path d="M9 9l4 4M13 9l-4 4" stroke="#fff" /></svg>
                <svg viewBox="0 0 16 16"><path d="M1 6h3l4-4v12l-4-4H1z" fill="#fff" /><path d="M10 5q3 3 0 6M12 3q5 5 0 10" stroke="#fff" fill="none" /></svg>
                <svg viewBox="0 0 16 16"><path d="M5 3h10v8H5zM8 14h5M2 2v9h3" stroke="#fff" fill="none" stroke-width="1.5" /></svg>
                <div class="tray__clock"><span>0:20</span><span>2022/4/25</span></div>
                <button class="tray__desk" aria-label="Show desktop"></button>
            </div>
        </footer>
    </div>
</template>

<style>
body {
    background: #000;
}
</style>

<style scoped>
.editor {
    --cyan: #9cdcdc;
    --mint: #54ceb0;
    --lite: #ccf6f4;
    --dark: #4c7c7c;
    position: relative;
    display: flex;
    flex-direction: column;
    height: 100vh;
    min-height: 1000px;
    overflow: hidden;
    font: bold 15px/17px "Liberation Mono", "Courier New", monospace;
    color: #000;
}

.editor *,
.editor *::after {
    box-sizing: border-box;
}

button,
input,
select {
    font: inherit;
    color: inherit;
    margin: 0;
    padding: 0;
    border: 0;
    border-radius: 0;
    background: none;
    white-space: nowrap;
    outline: none;
}

svg {
    display: block;
}

/* title bars */
.titlebar {
    display: flex;
    align-items: center;
    gap: 5px;
    height: 21px;
    flex: none;
    background:
        radial-gradient(closest-side, #dce0dc, transparent) 840px 2px / 60px 26px,
        radial-gradient(closest-side, #c8ccd0, transparent) 970px 2px / 90px 26px,
        radial-gradient(closest-side, #c0d0b8, transparent) 1300px 6px / 60px 26px,
        radial-gradient(closest-side, #50a8c8, transparent) 1395px 6px / 44px 26px,
        radial-gradient(closest-side, #b4b8cc, transparent) 1455px 6px / 60px 26px,
        linear-gradient(90deg, #d8e0e8 0, #a9b9cc 20%, #3a6494 23%, #2c5080 30%, #46698e 33%, #204674 38%, #3c5c84 52%, #203c64 70%, #486a98 80%, #20406c 86%, #2c5080);
    background-repeat: no-repeat;
}

.app-icon {
    width: 16px;
    height: 16px;
    flex: none;
    border: 1px solid #667;
}

.titlebar__text,
.window__name {
    font: 12px/18px "Open Sans", "Noto Sans", sans-serif;
    color: #111;
    white-space: nowrap;
}

.controls {
    display: flex;
    align-self: flex-start;
    margin-left: auto;
    margin-right: 3px;
    height: 18px;
    border: 1px solid #b4bcc8;
    border-top: 0;
    border-radius: 0 0 5px 5px;
    overflow: hidden;
}

.controls button {
    width: 28px;
    display: flex;
    align-items: center;
    justify-content: center;
    background: linear-gradient(#ffffff50, #ffffff20 45%, #00000030 50%, #ffffff20);
}

.controls button + button {
    border-left: 1px solid #a0a8b4;
}

.controls svg {
    width: 14px;
    height: 12px;
}

.controls .controls__close {
    width: 46px;
}

.controls .red {
    background: linear-gradient(#d89080, #c04830 45%, #a01c08 50%, #d04828);
}

/* menu bar and brand */
.top {
    display: flex;
    height: 57px;
    flex: none;
    background: var(--lite);
    border-top: 1px solid #354;
}

.menubar,
.brand {
    display: flex;
    align-items: center;
    background: var(--cyan);
    border: 2px solid var(--dark);
    border-top-color: #d4f4f4;
    border-left-color: #d4f4f4;
}

.menubar {
    flex: 1;
    gap: 15px;
    padding: 0 14px 0 13px;
    font: bold 15px/18px "Liberation Serif", "Times New Roman", serif;
}

.menubar__item u {
    text-underline-offset: 4px;
}

.menubar__help {
    margin-left: auto;
}

.brand {
    width: 413px;
    gap: 5px;
    padding: 0 3px 0 3px;
    border-color: var(--dark) #d4f4f4 #d4f4f4 var(--dark);
}

.brand__logo {
    display: flex;
    align-items: center;
    font: italic bold 32px/36px "Liberation Sans", Arial, sans-serif;
    color: #000080;
}

.brand__speed {
    width: 20px;
    height: 28px;
}

.brand__o {
    width: 20px;
    height: 22px;
}

.brand__name {
    display: flex;
    flex-direction: column;
    align-items: center;
    font-family: "Liberation Serif", "Times New Roman", serif;
    white-space: nowrap;
}

.brand__name strong {
    font-size: 24px;
    line-height: 26px;
}

.brand__name em {
    font-size: 14px;
    line-height: 24px;
}

.brand__date {
    display: flex;
    flex-direction: column;
    align-items: flex-end;
    font-style: italic;
    line-height: 16px;
    margin-left: auto;
    white-space: nowrap;
}

.brand__time {
    padding-right: 12px;
}

.brand__pause {
    width: 10px;
    height: 9px;
    margin: 4px 20px 0 0;
    border: solid #f00;
    border-width: 0 4px;
}

/* shared bevels */
.motif {
    width: 100%;
    height: 100%;
    padding: 0 4px;
    text-align: center;
    background: var(--cyan);
    border: 2px solid;
    border-color: var(--lite) var(--dark) var(--dark) var(--lite);
}

.frame {
    display: flex;
    align-items: center;
    padding: 2px;
    background: var(--mint);
    border: 1px solid #000;
}

.frame.cyan {
    background: var(--cyan);
}

.field {
    display: block;
    width: 100%;
    height: 27px;
    padding: 0 0 8px 5px;
    border: 2px solid;
    border-color: var(--dark) var(--lite) var(--lite) var(--dark);
    background:
        linear-gradient(90deg, #000 1px, transparent 1px 4px, #000 4px) 2px 1px / 5px 1px no-repeat,
        linear-gradient(90deg, #000 1px, transparent 1px 4px, #000 4px) 2px 15px / 5px 1px no-repeat,
        repeating-linear-gradient(#000 0 1px, transparent 1px 2px) 4px 2px / 1px 13px no-repeat;
}

.pick {
    position: relative;
    display: flex;
    flex: 1;
    height: 27px;
    background: inherit;
    border: 2px solid;
    border-color: var(--lite) var(--dark) var(--dark) var(--lite);
}

.pick select {
    appearance: none;
    width: 100%;
    padding-left: 3px;
}

.pick::after {
    content: "";
    position: absolute;
    right: 5px;
    top: 8px;
    width: 12px;
    height: 8px;
    border: 2px solid;
    border-color: var(--lite) var(--dark) var(--dark) var(--lite);
    pointer-events: none;
}

/* workspace */
.workspace {
    display: flex;
    flex: 1;
    min-height: 0;
}

.sidebar {
    display: flex;
    flex-direction: column;
    width: 155px;
    flex: none;
    padding: 3px 2px 0 3px;
    background: var(--mint);
}

.job__line {
    height: 19px;
    padding-left: 2px;
    background: var(--cyan);
    border: 1px solid #000;
    white-space: nowrap;
}

.job__matrix {
    height: 27px;
    margin-top: 3px;
}

.job__matrix .motif {
    text-align: left;
    padding-left: 2px;
}

.layers {
    flex: 1;
    margin: 2px -2px 4px -3px;
    padding: 2px 0 0 4px;
    border-top: 1px solid #2c6c60;
    border-left: 2px solid #2c6c60;
}

.layers__inner {
    display: flex;
    flex-direction: column;
    gap: 3px;
    width: 122px;
    padding: 1px 3px 10px 0;
    border: solid #000;
    border-width: 1px 1px 1px 0;
    box-shadow: 1px 1px #b4f0e0;
}

.layers__group {
    background: #000;
    padding: 1px 1px 1px 2px;
}

.layer {
    display: flex;
    align-items: center;
    height: 16px;
    font-size: 12px;
    line-height: 14px;
}

.layer__check {
    appearance: none;
    width: 15px;
    height: 14px;
    flex: none;
    border: 2px solid #fff;
    outline: 2px solid #000;
    outline-offset: -4px;
    background: #fff;
}

.layer__check.on {
    border-color: #0000a0;
    outline-color: #0000a0;
}

.layer__swatch {
    width: 15px;
    height: 15px;
    margin: 0 1px 0 2px;
    flex: none;
}

.layer__name {
    flex: 1;
    height: 14px;
    padding-left: 1px;
    overflow: hidden;
    background: var(--cyan);
    white-space: nowrap;
}

.layer__hand {
    width: 13px;
    height: 14px;
    padding: 2px 3px;
    flex: none;
    background: var(--cyan);
}

.layer.white > .layer__name,
.layer.white > svg {
    background: #fff;
}

.layer.green > .layer__name,
.layer.green > svg {
    background: #00a47c;
}

.layer.orange > .layer__name,
.layer.orange > svg {
    background: #ffc64c;
}

.layer.steel > .layer__name,
.layer.steel > svg {
    background: #9cb4bc;
}

.layer.grey > .layer__name {
    background: #d8d8d8;
}

.picked {
    height: 21px;
    padding: 1px 3px;
    font-size: 12px;
    background: #ffc64c;
    border: 1px solid #000;
}

.stage {
    position: relative;
    flex: 1;
    min-width: 0;
    z-index: 2;
}

.stage__board,
.stage__arrow {
    position: absolute;
    inset: 0;
    width: 100%;
    height: 100%;
    pointer-events: none;
}

.silk {
    font: 15px "Liberation Mono", monospace;
    fill: #1030ff;
}

/* floating windows */
.window {
    position: absolute;
    display: flex;
    flex-direction: column;
    padding: 0 6px 6px;
    border: 1px solid #c4c4c4;
    border-radius: 7px 7px 5px 5px;
    background: linear-gradient(100deg, #707478 0, #181818 40%, #202020 75%, #7c7c7c 100%);
}

.window__title {
    display: flex;
    align-items: center;
    gap: 5px;
    height: 28px;
    flex: none;
}

.window__name {
    padding: 0 10px 0 0;
    background: linear-gradient(90deg, #8c9094, #a8a8a8 40%, #949494 85%, transparent);
    border-radius: 8px;
}

.window__title .controls {
    margin-right: -2px;
}

.window__body {
    display: flex;
    flex-direction: column;
    flex: 1;
    min-height: 0;
    border: 1px solid #000;
    background: var(--mint);
}

.drill {
    left: 52px;
    top: 70px;
    width: 779px;
    height: 812px;
}

.bar {
    display: flex;
    flex: none;
    background: var(--mint);
    white-space: nowrap;
}

.bar .frame {
    flex: none;
}

.bar--layer {
    height: 32px;
}

.bar--board {
    height: 30px;
}

.bar--board .field {
    height: 24px;
    padding-bottom: 4px;
}

.w-layer {
    width: 167px;
}

.spread {
    display: flex;
    justify-content: space-between;
    align-items: center;
    padding: 0 13px 0 2px;
}

.w-drl {
    width: 110px;
}

.slots {
    width: 187px;
    margin-left: 149px;
    padding-left: 9px;
    gap: 6px;
}

.board {
    width: 307px;
    gap: 4px;
    padding: 0 1px;
}

.board .field {
    width: 104px;
    margin-left: 9px;
}

.w-user {
    width: 177px;
}

.w-user .motif {
    text-align: left;
    padding-left: 1px;
}

.w-hasl {
    width: 127px;
    margin-left: 2px;
}

.grid {
    display: flex;
    flex: 1;
    min-height: 0;
    gap: 5px;
    margin-top: 2px;
    padding: 0 2px;
}

.grid__clip {
    width: 741px;
    overflow: hidden;
    display: flex;
    align-items: flex-end;
    border: solid #2c6c60;
    border-width: 1px;
    border-right-color: #b4f0e0;
    border-bottom-color: #b4f0e0;
}

table {
    table-layout: fixed;
    width: 749px;
    flex: none;
    border-spacing: 0;
    border-left: 2px solid #000;
}

.c-icon {
    width: 25px;
}

.c-id {
    width: 68px;
}

.c-count {
    width: 60px;
}

.c-slot {
    width: 83px;
}

.c-kind {
    width: 115px;
}

.c-size {
    width: 84px;
}

.c-tol {
    width: 73px;
}

td {
    height: 33px;
    padding: 0 2px;
    border: solid #000;
    border-width: 0 2px 2px 0;
    vertical-align: middle;
}

td.num {
    text-align: right;
}

td.white {
    --lite: #d0d0d0;
    --dark: #949494;
    background-color: #fff;
}

td.cream {
    --lite: #d0d0a4;
    --dark: #94946c;
    background-color: #ffffcc;
}

td .pick {
    margin-left: 4px;
    --lite: #d4d4a8;
}

td.focus {
    outline: 2px solid #000;
    outline-offset: -2px;
}

td.focus .field {
    background: none;
}

.sym {
    width: 20px;
    height: 20px;
}

.sym text {
    font: 7px "Liberation Sans", sans-serif;
}

.tool {
    --dark: #247460;
    --lite: #a0f0dc;
    width: 62px;
    height: 27px;
    padding: 0 2px;
    text-align: left;
    background: var(--mint);
}

.tool.hot {
    background: #ffc64c;
}

.vscroll,
.hscroll {
    display: flex;
    background: #44ac94;
    border: 2px solid;
    border-color: #2c6c60 #a8ecd8 #a8ecd8 #2c6c60;
}

.vscroll {
    flex-direction: column;
    width: 15px;
}

.vscroll svg,
.hscroll svg {
    width: 11px;
    height: 11px;
    fill: var(--mint);
    stroke: #a8ecd8;
    flex: none;
}

.vscroll__thumb {
    height: 51%;
    margin-top: auto;
    background: var(--mint);
    border: 2px solid;
    border-color: #a8ecd8 #2c6c60 #2c6c60 #a8ecd8;
}

.hscroll {
    width: 741px;
    height: 16px;
    margin: 4px 2px 5px;
    flex: none;
}

.hscroll svg:last-child {
    margin-left: auto;
}

.hscroll__thumb {
    width: 86%;
    background: var(--mint);
    border: 2px solid;
    border-color: #a8ecd8 #2c6c60 #2c6c60 #a8ecd8;
}

.bar--nav {
    align-items: center;
    height: 34px;
    border: solid #000;
    border-width: 1px 0;
}

.bar--nav .frame {
    height: 32px;
}

.bar--nav .frame .motif {
    padding: 0 2px;
}

.bar--nav .frame .arrow {
    font-size: 12px;
}

.nav-tool {
    width: 41px;
    height: 32px;
    margin-right: 2px;
    padding: 7px 3px;
    font-size: 12px;
    background: #ffc64c;
    border: 1px solid #000;
}

.bar--nav label {
    margin: 0 5px 0 2px;
}

.bar--nav .index {
    width: 59px;
    height: 30px;
    margin-right: 4px;
}

.bar--nav .frame .icon {
    width: 24px;
    padding: 2px;
}

.icon svg {
    width: 16px;
    height: 16px;
}

.bar--nav .units {
    width: 89px;
    margin-left: auto;
    padding-left: 6px;
}

.bar--nav .mode {
    width: 114px;
    padding-left: 5px;
}

.bar--merge {
    justify-content: flex-end;
    height: 34px;
    margin-top: 4px;
    border-top: 1px solid #000;
}

.merge {
    width: 358px;
    padding-left: 10px;
}

.merge .pick {
    margin-left: 15px;
}

.w-merge .motif {
    padding: 0 2px;
}

.bar--end {
    height: 28px;
}

.bar--end .frame {
    flex: 1;
}

/* popview */
.pop {
    left: 1073px;
    top: 380px;
    width: 603px;
    height: 438px;
    padding-bottom: 5px;
    background: linear-gradient(90deg, #787c80 0, #50546c 14%, #282838 24%, #202020 36%, #181818 60%, #555 82%, #a08858 92%, #222 100%);
}

.pop .controls {
    margin-right: -1px;
}

.pop__row {
    display: flex;
    flex: 1;
    min-height: 0;
}

.pop__view {
    flex: 1;
    min-width: 0;
    height: 100%;
    background: #000;
    border: 2px solid;
    border-color: #2c6c60 #b4f0e0 #b4f0e0 #2c6c60;
}

.pop__silk {
    font: 17px "Liberation Sans", Arial, sans-serif;
    fill: #0028ff;
}

.pop__big {
    font-size: 20px;
}

.pop__tools {
    display: flex;
    flex-direction: column;
    width: 36px;
    border-left: 1px solid #000;
}

.pop__tools .cell {
    width: 34px;
    height: 35px;
    margin: 0 1px;
}

.pop__tools .cell svg {
    width: 22px;
    height: 22px;
}

.pop__close {
    height: 29px;
    flex: none;
}

/* toolbox */
.toolbox {
    display: flex;
    flex-direction: column;
    width: 163px;
    flex: none;
    background: #000;
    border-left: 1px solid #2c6c60;
}

.toolbox__grid {
    display: grid;
    grid-template-columns: repeat(4, 40px);
    padding: 2px 0;
    border-bottom: 2px solid #90e0c8;
}

.toolbox__edit {
    border-bottom-color: #888;
}

.cell {
    display: flex;
    align-items: center;
    justify-content: center;
    height: 40px;
    background: var(--cyan);
    border: solid #000;
    border-width: 1px;
    box-shadow: inset 2px 2px var(--lite), inset -2px -2px var(--dark);
}

.cell svg {
    width: 30px;
    height: 30px;
    outline: 1px solid #000;
    outline-offset: -1px;
}

.cell.grey {
    --lite: #f0f0f0;
    --dark: #808080;
    background: #d0d0d0;
}

.cell.grey.white {
    --dark: #c0c0c0;
    background: #fff;
}

.cell.grey.amber {
    --lite: #ffe8a8;
    --dark: #a47c28;
    background: #ffc64c;
}

.cell.red {
    --lite: #c01818;
    --dark: #a01010;
    box-shadow: inset 0 0 0 3px #b81c1c;
}

.overview {
    flex: 1;
    min-height: 0;
    overflow: hidden;
}

.overview svg {
    width: 100%;
    height: 100%;
}

.coords {
    display: flex;
    flex-direction: column;
    justify-content: center;
    height: 43px;
    padding-left: 2px;
    line-height: 15px;
    background: var(--cyan);
    border-top: 2px solid var(--lite);
    white-space: nowrap;
}

/* status row */
.status {
    --lite: #d0d0a4;
    --dark: #94946c;
    display: flex;
    align-items: center;
    height: 35px;
    flex: none;
    gap: 2px;
    padding: 3px 0 1px 2px;
    background: #ffffcc;
    border-top: 2px solid #000;
    border-bottom: 1px solid #000;
    font-size: 12px;
    white-space: nowrap;
}

.status__btn {
    display: flex;
    align-items: center;
    justify-content: center;
    width: 30px;
    height: 30px;
    border: 1px solid #000;
    box-shadow: inset 0 0 0 2px #d8d8ac;
}

.status__btn.teal {
    box-shadow: inset 0 0 0 3px #64bca4;
}

.status__btn svg {
    width: 20px;
    height: 20px;
}

.status__xy {
    width: 44px;
}

.status__input {
    width: 170px;
    height: 29px;
    outline: 1px solid #000;
}

.status__msg {
    flex: 1;
    padding-left: 3px;
}

.status__unit {
    --lite: #ccf6f4;
    --dark: #4c7c7c;
    width: 80px;
    height: 31px;
    padding: 2px 4px;
    background: var(--cyan);
    border-left: 2px solid #000;
    font-size: 15px;
}

.output {
    height: 32px;
    flex: none;
    margin-left: 2px;
    background: #b4ffff;
    border: 2px solid #5c9090;
    border-bottom-color: #5c9090;
    box-shadow: inset 0 0 0 1px #000;
}

.langbar {
    position: absolute;
    right: 100px;
    bottom: 50px;
    z-index: 5;
    display: flex;
    align-items: center;
    gap: 6px;
    width: 79px;
    height: 24px;
    padding: 0 4px;
    background: linear-gradient(#9aa4ac, #56606a);
    border: 1px solid #445;
}

.langbar__grip {
    width: 5px;
    height: 14px;
    background: repeating-linear-gradient(#ccc 0 2px, transparent 2px 4px);
}

.langbar svg {
    width: 18px;
    height: 12px;
}

.langbar b {
    width: 14px;
    height: 14px;
    border-radius: 50%;
    background: #1030a0;
    color: #fff;
    font: bold 11px/14px "Liberation Sans", sans-serif;
    text-align: center;
}

.langbar .langbar__more {
    width: 8px;
    height: 16px;
}

/* taskbar */
.taskbar {
    display: flex;
    align-items: center;
    gap: 4px;
    height: 40px;
    flex: none;
    background: linear-gradient(#5c7898, #1c3454 12%, #203c60 60%, #182c48);
}

.start {
    width: 56px;
    height: 38px;
    padding-left: 8px;
}

.start svg {
    width: 38px;
    height: 38px;
}

.task {
    display: flex;
    justify-content: center;
    align-items: center;
    width: 58px;
    height: 38px;
    border: 1px solid #a0b0c0;
    border-radius: 3px;
    background: linear-gradient(150deg, #98a4b0 0, #50647c 45%, #30445c 50%, #405870);
}

.task.active {
    background: linear-gradient(150deg, #f0f4f8 0, #b0b8c4 45%, #8490a0 50%, #a8b0bc);
}

.task.stack {
    width: 51px;
    margin-right: 6px;
    box-shadow: 3px 0 0 -1px #30445c, 4px 0 0 -1px #a0b0c0, 6px 0 0 -1px #30445c, 7px 0 0 -1px #a0b0c0;
}

.task svg {
    width: 34px;
    height: 34px;
}

.tray {
    display: flex;
    align-items: center;
    gap: 8px;
    height: 100%;
    margin-left: auto;
}

.tray svg {
    width: 16px;
    height: 16px;
}

.tray__clock {
    display: flex;
    flex-direction: column;
    align-items: center;
    padding-left: 6px;
    margin-right: -4px;
    font: 12px/18px "Open Sans", "Noto Sans", sans-serif;
    color: #fff;
}

.tray__desk {
    width: 14px;
    height: 100%;
    border: 1px solid #8494a8;
    background: linear-gradient(#7c90a8, #304860);
}
</style>
